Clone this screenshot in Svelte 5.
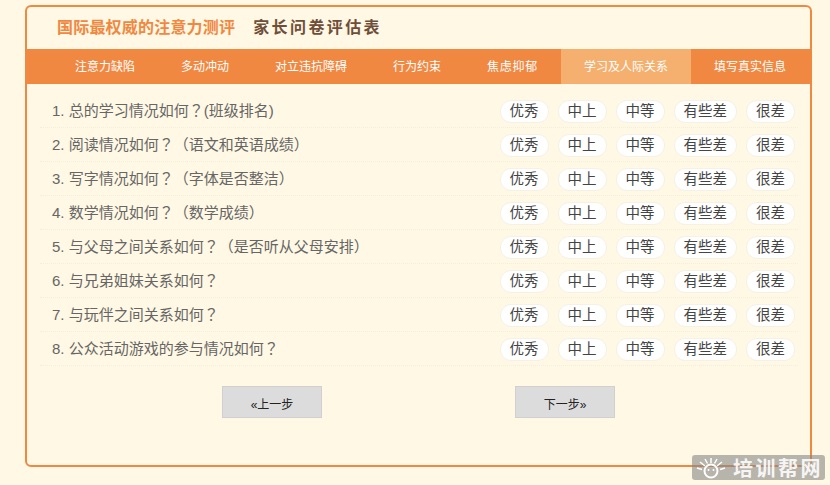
<script>
  const tabs = ['注意力缺陷', '多动冲动', '对立违抗障碍', '行为约束', '焦虑抑郁', '学习及人际关系', '填写真实信息'];
  const questions = [
    ['总的学习情况如何', '(班级排名)'],
    ['阅读情况如何', '（语文和英语成绩）'],
    ['写字情况如何', '（字体是否整洁）'],
    ['数学情况如何', '（数学成绩）'],
    ['与父母之间关系如何', '（是否听从父母安排）'],
    ['与兄弟姐妹关系如何', ''],
    ['与玩伴之间关系如何', ''],
    ['公众活动游戏的参与情况如何', '']
  ];
  const options = ['优秀', '中上', '中等', '有些差', '很差'];
</script>

<div class="page">
  <div class="card">
    <div class="head">
      <span class="brand">国际最权威的注意力测评</span>
      <span class="title">家长问卷评估表</span>
    </div>
    <ul class="tabs">
      {#each tabs as tab, i}
        <li class:on={i === 5}>{tab}</li>
      {/each}
    </ul>
    <div class="list">
      {#each questions as q, i}
        <div class="row">
          <span class="q">{i + 1}. {q[0]}<span class="qm">？</span>{q[1]}</span>
          <span class="opts">
            {#each options as o}
              <span class="opt">{o}</span>
            {/each}
          </span>
        </div>
      {/each}
    </div>
    <div class="steps">
      <button>«上一步</button>
      <button>下一步»</button>
    </div>
  </div>

  <div class="mark">
    <svg width="30" height="24" viewBox="0 0 30 24" fill="none" stroke="#fff" stroke-width="1.5">
      <circle cx="15" cy="15" r="6.5" stroke-width="2" />
      <path d="M15 2v5M9 3l2.5 4.5M21 3l-2.5 4.5M4 6l5 4M26 6l-5 4M1 12l5 1.500M29 12l-5 1.500" />
      <circle cx="12.500" cy="14" r="1" fill="#fff" stroke="none" />
      <circle cx="17.500" cy="14" r="1" fill="#fff" stroke="none" />
    </svg>
    <span>培训帮网</span>
  </div>
</div>

<style>
  :global(body) {
    margin: 0;
    background: #fff8e4;
  }

  .page {
    position: relative;
    width: 830px;
    height: 485px;
    padding: 5px 0 0 25px;
    box-sizing: border-box;
    overflow: hidden;
    font-family: "Liberation Sans", "Noto Sans CJK SC", sans-serif;
  }

  .card {
    width: 787px;
    height: 462px;
    box-sizing: border-box;
    border: 2px solid #f18842;
    border-radius: 6px;
  }

  .head {
    display: flex;
    align-items: center;
    height: 38px;
    padding: 0 0 4px 30px;
    font-weight: bold;
  }

  .brand {
    color: #f18842;
    font-size: 16px;
    letter-spacing: 0.2px;
  }

  .title {
    margin-left: 18px;
    color: #6f4f3a;
    font-size: 16px;
    letter-spacing: 2.4px;
  }

  .tabs {
    display: flex;
    height: 35px;
    margin: 0;
    padding: 0 0 0 25px;
    list-style: none;
    background: #f18842;
  }

  .tabs li {
    padding: 2px 23px 0;
    color: #fff;
    font-size: 12px;
    line-height: 33px;
    white-space: nowrap;
  }

  .tabs li:nth-child(5) {
    letter-spacing: 0.7px;
  }

  .tabs li.on {
    background: #f5af6e;
  }

  .list {
    margin: 10px 12px 0 13px;
  }

  .row {
    display: flex;
    align-items: center;
    justify-content: space-between;
    height: 34px;
    box-sizing: border-box;
    padding: 0 3px 0 12px;
    border-bottom: 1px dotted #f5eeda;
  }

  .q {
    margin-top: -2px;
    color: #666;
    font-size: 15px;
  }

  .qm {
    font-family: "Noto Sans CJK JP", sans-serif;
  }

  .opts {
    display: flex;
    gap: 9px;
    margin-top: 1px;
  }

  .opt {
    height: 21px;
    padding: 0 9px;
    border: 1px solid #f6f1e6;
    border-radius: 11px;
    background: #fff;
    color: #444;
    font-size: 14.5px;
    line-height: 21px;
  }

  .steps {
    display: flex;
    gap: 193px;
    margin: 20px 0 0 195px;
  }

  button {
    width: 100px;
    height: 32px;
    padding: 2px 0 0;
    border: 1px solid #d0d0d0;
    background: #dcdcdc;
    color: #222;
    font: 12px "Liberation Sans", "Noto Sans CJK SC", sans-serif;
  }

  .mark {
    position: absolute;
    left: 692px;
    top: 455px;
    display: flex;
    align-items: center;
    width: 133px;
    height: 25px;
    padding-left: 4px;
    box-sizing: border-box;
    border-radius: 3px;
    background: rgba(135, 135, 135, 0.6);
    color: rgba(255, 255, 255, 0.9);
    font-size: 20px;
    font-weight: bold;
    letter-spacing: 2.5px;
  }

  .mark span {
    margin-left: 7px;
    white-space: nowrap;
  }
</style>
